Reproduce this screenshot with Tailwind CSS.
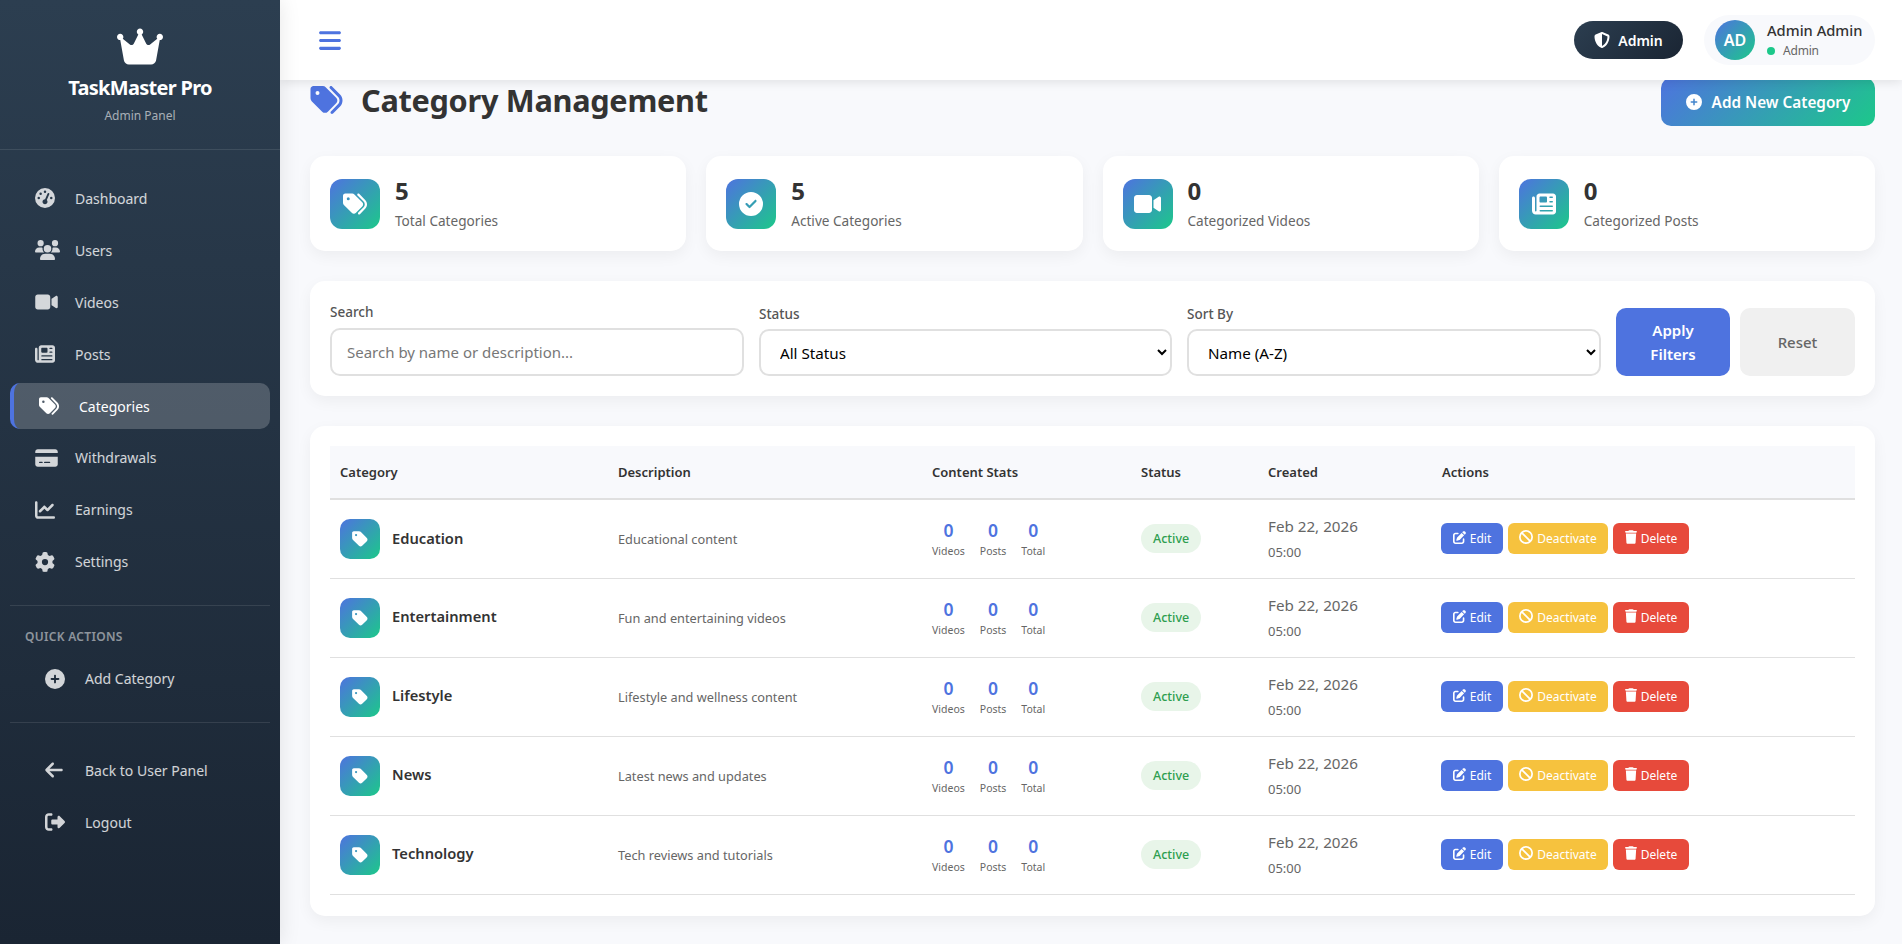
<!DOCTYPE html>
<html lang="en">
<head>
    <meta charset="UTF-8">
    <meta name="viewport" content="width=device-width, initial-scale=1.0">
    <title>Category Management - TaskMaster Pro</title>
    <script src="https://cdn.jsdelivr.net/npm/@tailwindcss/browser@4"></script>
</head>
<body class="bg-[#f8f9fc] text-[#333] font-['Noto_Sans',sans-serif] overflow-hidden">

    <!-- icon set -->
    <svg class="hidden">
        <symbol id="i-crown" viewBox="0 0 576 512"><path fill="currentColor" d="M309 106c11.4-7 19-19.7 19-34c0-22.1-17.9-40-40-40s-40 17.9-40 40c0 14.4 7.6 27 19 34L209.7 220.6c-9.1 18.2-32.7 23.4-48.6 10.7L72 160c5-6.7 8-15 8-24c0-22.1-17.9-40-40-40S0 113.9 0 136s17.9 40 40 40c.2 0 .5 0 .7 0L86.4 427.4c5.5 30.4 32 52.6 63 52.6H426.6c30.9 0 57.4-22.1 63-52.6L535.3 176c.2 0 .5 0 .7 0c22.1 0 40-17.9 40-40s-17.9-40-40-40s-40 17.9-40 40c0 9 3 17.3 8 24l-89.1 71.3c-15.9 12.7-39.5 7.5-48.6-10.7L309 106z"/></symbol>
        <symbol id="i-gauge" viewBox="0 0 512 512"><path fill="currentColor" d="M0 256a256 256 0 1 1 512 0A256 256 0 1 1 0 256zM288 96a32 32 0 1 0 -64 0 32 32 0 1 0 64 0zM256 416c35.3 0 64-28.7 64-64c0-17.4-6.9-33.1-18.1-44.6L366 161.7c5.3-12.1-.2-26.3-12.3-31.6s-26.3 .2-31.6 12.3L257.9 288c-.6 0-1.3 0-1.9 0c-35.3 0-64 28.7-64 64s28.7 64 64 64zM176 144a32 32 0 1 0 -64 0 32 32 0 1 0 64 0zM96 288a32 32 0 1 0 0-64 32 32 0 1 0 0 64zm352-32a32 32 0 1 0 -64 0 32 32 0 1 0 64 0z"/></symbol>
        <symbol id="i-users" viewBox="0 0 640 512"><path fill="currentColor" d="M144 0a80 80 0 1 1 0 160A80 80 0 1 1 144 0zM512 0a80 80 0 1 1 0 160A80 80 0 1 1 512 0zM0 298.7C0 239.8 47.8 192 106.7 192h42.7c15.9 0 31 3.5 44.6 9.7c-1.3 7.2-1.9 14.7-1.9 22.3c0 38.2 16.8 72.5 43.3 96c-.2 0-.4 0-.7 0H21.3C9.6 320 0 310.4 0 298.7zM405.3 320c-.2 0-.4 0-.7 0c26.6-23.5 43.3-57.8 43.3-96c0-7.6-.7-15-1.9-22.3c13.6-6.3 28.7-9.7 44.6-9.7h42.7C592.2 192 640 239.8 640 298.7c0 11.8-9.6 21.3-21.3 21.3H405.3zM224 224a96 96 0 1 1 192 0 96 96 0 1 1 -192 0zM128 485.3C128 411.7 187.7 352 261.3 352H378.7C452.3 352 512 411.7 512 485.3c0 14.7-11.9 26.7-26.7 26.7H154.7c-14.7 0-26.7-11.9-26.7-26.7z"/></symbol>
        <symbol id="i-video" viewBox="0 0 576 512"><path fill="currentColor" d="M0 128C0 92.7 28.7 64 64 64H320c35.3 0 64 28.7 64 64V384c0 35.3-28.7 64-64 64H64c-35.3 0-64-28.7-64-64V128zM559.1 99.8c10.4 5.6 16.9 16.4 16.9 28.2V384c0 11.8-6.5 22.6-16.9 28.2s-23 5-32.9-1.6l-96-64L416 337.1V320 192 174.9l14.2-9.5 96-64c9.8-6.5 22.4-7.2 32.9-1.6z"/></symbol>
        <symbol id="i-news" viewBox="0 0 512 512"><path fill="currentColor" d="M96 96c0-35.3 28.7-64 64-64H448c35.3 0 64 28.7 64 64V416c0 35.3-28.7 64-64 64H80c-44.2 0-80-35.8-80-80V128c0-17.7 14.3-32 32-32s32 14.3 32 32V400c0 8.8 7.2 16 16 16s16-7.2 16-16V96zm64 24v80c0 13.3 10.7 24 24 24H296c13.3 0 24-10.7 24-24V120c0-13.3-10.7-24-24-24H184c-13.3 0-24 10.7-24 24zm208-8c0 8.8 7.2 16 16 16h48c8.8 0 16-7.2 16-16s-7.2-16-16-16H384c-8.8 0-16 7.2-16 16zm0 96c0 8.8 7.2 16 16 16h48c8.8 0 16-7.2 16-16s-7.2-16-16-16H384c-8.8 0-16 7.2-16 16zM160 304c0 8.8 7.2 16 16 16H432c8.8 0 16-7.2 16-16s-7.2-16-16-16H176c-8.8 0-16 7.2-16 16zm0 96c0 8.8 7.2 16 16 16H432c8.8 0 16-7.2 16-16s-7.2-16-16-16H176c-8.8 0-16 7.2-16 16z"/></symbol>
        <symbol id="i-tags" viewBox="0 0 512 512"><path fill="currentColor" d="M345 39.1L472.8 168.4c52.4 53 52.4 138.2 0 191.2L360.8 472.9c-9.3 9.4-24.5 9.5-33.9 .2s-9.5-24.5-.2-33.9L438.6 325.9c33.9-34.3 33.9-89.4 0-123.7L310.9 72.9c-9.3-9.4-9.2-24.6 .2-33.9s24.6-9.2 33.9 .2zM0 229.5V80C0 53.5 21.5 32 48 32H197.5c17 0 33.3 6.7 45.3 18.7l168 168c25 25 25 65.5 0 90.5L277.3 442.7c-25 25-65.5 25-90.5 0l-168-168C6.7 262.7 0 246.5 0 229.5zM144 144a32 32 0 1 0 -64 0 32 32 0 1 0 64 0z"/></symbol>
        <symbol id="i-tag" viewBox="0 0 448 512"><path fill="currentColor" d="M0 80V229.5c0 17 6.7 33.3 18.7 45.3l176 176c25 25 65.5 25 90.5 0L418.7 317.3c25-25 25-65.5 0-90.5l-176-176c-12-12-28.3-18.7-45.3-18.7H48C21.5 32 0 53.5 0 80zm112 32a32 32 0 1 1 0 64 32 32 0 1 1 0-64z"/></symbol>
        <symbol id="i-card" viewBox="0 0 576 512"><path fill="currentColor" d="M64 32C28.7 32 0 60.7 0 96v32H576V96c0-35.3-28.7-64-64-64H64zM576 224H0V416c0 35.3 28.7 64 64 64H512c35.3 0 64-28.7 64-64V224zM112 352h64c8.8 0 16 7.2 16 16s-7.2 16-16 16H112c-8.8 0-16-7.2-16-16s7.2-16 16-16zm112 16c0-8.8 7.2-16 16-16H368c8.8 0 16 7.2 16 16s-7.2 16-16 16H240c-8.8 0-16-7.2-16-16z"/></symbol>
        <symbol id="i-chart" viewBox="0 0 512 512"><path fill="currentColor" d="M64 64c0-17.7-14.3-32-32-32S0 46.3 0 64V400c0 44.2 35.8 80 80 80H480c17.7 0 32-14.3 32-32s-14.3-32-32-32H80c-8.8 0-16-7.2-16-16V64zm406.6 86.6c12.5-12.5 12.5-32.8 0-45.3s-32.8-12.5-45.3 0L320 210.7l-57.4-57.4c-12.5-12.5-32.8-12.5-45.3 0l-112 112c-12.5 12.5-12.5 32.8 0 45.3s32.8 12.5 45.3 0L240 221.3l57.4 57.4c12.5 12.5 32.8 12.5 45.3 0l128-128z"/></symbol>
        <symbol id="i-gear" viewBox="0 0 512 512"><path fill="currentColor" d="M495.9 166.6c3.2 8.7 .5 18.4-6.4 24.6l-43.3 39.4c1.1 8.3 1.7 16.8 1.7 25.4s-.6 17.1-1.7 25.4l43.3 39.4c6.9 6.2 9.6 15.9 6.4 24.6c-4.4 11.9-9.7 23.3-15.8 34.3l-4.7 8.1c-6.6 11-14 21.4-22.1 31.2c-5.9 7.2-15.7 9.6-24.5 6.8l-55.7-17.7c-13.4 10.3-28.2 18.9-44 25.4l-12.5 57.1c-2 9.1-9 16.3-18.2 17.8c-13.8 2.3-28 3.5-42.5 3.5s-28.7-1.2-42.5-3.5c-9.2-1.5-16.2-8.7-18.2-17.8l-12.5-57.1c-15.8-6.5-30.6-15.1-44-25.4L83.1 425.9c-8.8 2.8-18.6 .3-24.5-6.8c-8.1-9.8-15.5-20.2-22.1-31.2l-4.7-8.1c-6.1-11-11.4-22.4-15.8-34.3c-3.2-8.7-.5-18.4 6.4-24.6l43.3-39.4C64.6 273.1 64 264.6 64 256s.6-17.1 1.7-25.4L22.4 191.2c-6.9-6.2-9.6-15.9-6.4-24.6c4.4-11.9 9.7-23.3 15.8-34.3l4.7-8.1c6.6-11 14-21.4 22.1-31.2c5.9-7.2 15.7-9.6 24.5-6.8l55.7 17.7c13.4-10.3 28.2-18.9 44-25.4l12.5-57.1c2-9.1 9-16.3 18.2-17.8C227.3 1.2 241.5 0 256 0s28.7 1.2 42.5 3.5c9.2 1.5 16.2 8.7 18.2 17.8l12.5 57.1c15.8 6.5 30.6 15.1 44 25.4l55.7-17.7c8.8-2.8 18.6-.3 24.5 6.8c8.1 9.8 15.5 20.2 22.1 31.2l4.7 8.1c6.1 11 11.4 22.4 15.8 34.3zM256 336a80 80 0 1 0 0-160 80 80 0 1 0 0 160z"/></symbol>
        <symbol id="i-plus" viewBox="0 0 512 512"><path fill="currentColor" d="M256 512A256 256 0 1 0 256 0a256 256 0 1 0 0 512zM232 344V280H168c-13.3 0-24-10.7-24-24s10.7-24 24-24h64V168c0-13.3 10.7-24 24-24s24 10.7 24 24v64h64c13.3 0 24 10.7 24 24s-10.7 24-24 24H280v64c0 13.3-10.7 24-24 24s-24-10.7-24-24z"/></symbol>
        <symbol id="i-back" viewBox="0 0 448 512"><path fill="currentColor" d="M9.4 233.4c-12.5 12.5-12.5 32.8 0 45.3l160 160c12.5 12.5 32.8 12.5 45.3 0s12.5-32.8 0-45.3L109.2 288 416 288c17.7 0 32-14.3 32-32s-14.3-32-32-32l-306.7 0L214.6 118.6c12.5-12.5 12.5-32.8 0-45.3s-32.8-12.5-45.3 0l-160 160z"/></symbol>
        <symbol id="i-logout" viewBox="0 0 512 512"><path fill="currentColor" d="M377.9 105.9L500.7 228.7c7.2 7.2 11.3 17.1 11.3 27.3s-4.1 20.1-11.3 27.3L377.9 406.1c-6.4 6.4-15 9.9-24 9.9c-18.7 0-33.9-15.2-33.9-33.9l0-62.1-128 0c-17.7 0-32-14.3-32-32l0-64c0-17.7 14.3-32 32-32l128 0 0-62.1c0-18.7 15.2-33.9 33.9-33.9c9 0 17.6 3.6 24 9.9zM160 96L96 96c-17.7 0-32 14.3-32 32l0 256c0 17.7 14.3 32 32 32l64 0c17.7 0 32 14.3 32 32s-14.3 32-32 32l-64 0c-53 0-96-43-96-96L0 128C0 75 43 32 96 32l64 0c17.7 0 32 14.3 32 32s-14.3 32-32 32z"/></symbol>
        <symbol id="i-bars" viewBox="0 0 448 512"><path fill="currentColor" d="M0 96C0 78.3 14.3 64 32 64H416c17.7 0 32 14.3 32 32s-14.3 32-32 32H32C14.3 128 0 113.7 0 96zM0 256c0-17.7 14.3-32 32-32H416c17.7 0 32 14.3 32 32s-14.3 32-32 32H32c-17.7 0-32-14.3-32-32zM448 416c0 17.7-14.3 32-32 32H32c-17.7 0-32-14.3-32-32s14.3-32 32-32H416c17.7 0 32 14.3 32 32z"/></symbol>
        <symbol id="i-shield" viewBox="0 0 512 512"><path fill="currentColor" d="M256 0c4.6 0 9.2 1 13.4 2.9L457.7 82.8c22 9.3 38.4 31 38.3 57.2c-.5 99.2-41.3 280.7-213.6 363.2c-16.7 8-36.1 8-52.8 0C57.3 420.7 16.5 239.2 16 140c-.1-26.2 16.3-47.9 38.3-57.2L242.7 2.9C246.8 1 251.4 0 256 0zm0 66.8V444.8C394 378 431.1 230.1 432 141.4L256 66.8l0 0z"/></symbol>
        <symbol id="i-check" viewBox="0 0 512 512"><path fill="currentColor" d="M256 512A256 256 0 1 0 256 0a256 256 0 1 0 0 512zM369 209L241 337c-9.4 9.4-24.6 9.4-33.9 0l-64-64c-9.4-9.4-9.4-24.6 0-33.9s24.6-9.4 33.9 0l47 47L335 175c9.4-9.4 24.6-9.4 33.9 0s9.4 24.6 0 33.9z"/></symbol>
        <symbol id="i-edit" viewBox="0 0 512 512"><path fill="currentColor" d="M471.6 21.7c-21.9-21.9-57.3-21.9-79.2 0L362.3 51.7l97.9 97.9 30.1-30.1c21.9-21.9 21.9-57.3 0-79.2L471.6 21.7zm-299.2 220c-6.1 6.1-10.8 13.6-13.5 21.9l-29.6 88.8c-2.9 8.6-.6 18.1 5.8 24.6s15.9 8.7 24.6 5.8l88.8-29.6c8.2-2.7 15.7-7.4 21.9-13.5L437.7 172.3 339.7 74.3 172.4 241.7zM96 64C43 64 0 107 0 160V416c0 53 43 96 96 96H352c53 0 96-43 96-96V320c0-17.7-14.3-32-32-32s-32 14.3-32 32v96c0 17.7-14.3 32-32 32H96c-17.7 0-32-14.3-32-32V160c0-17.7 14.3-32 32-32h96c17.7 0 32-14.3 32-32s-14.3-32-32-32H96z"/></symbol>
        <symbol id="i-ban" viewBox="0 0 512 512"><path fill="currentColor" d="M367.2 412.5L99.5 144.8C77.1 176.1 64 214.5 64 256c0 106 86 192 192 192c41.5 0 79.9-13.1 111.2-35.5zm45.3-45.3C434.9 335.9 448 297.5 448 256c0-106-86-192-192-192c-41.5 0-79.9 13.1-111.2 35.5L412.5 367.2zM0 256a256 256 0 1 1 512 0A256 256 0 1 1 0 256z"/></symbol>
        <symbol id="i-trash" viewBox="0 0 448 512"><path fill="currentColor" d="M135.2 17.7L128 32H32C14.3 32 0 46.3 0 64S14.3 96 32 96H416c17.7 0 32-14.3 32-32s-14.3-32-32-32H320l-7.2-14.3C307.4 6.8 296.3 0 284.2 0H163.8c-12.1 0-23.2 6.8-28.6 17.7zM416 128H32L53.2 467c1.6 25.3 22.6 45 47.9 45H346.9c25.3 0 46.3-19.7 47.9-45L416 128z"/></symbol>
    </svg>

    <div class="flex h-screen">

        <!-- sidebar -->
        <aside class="w-[280px] shrink-0 relative z-20 flex flex-col text-white bg-[linear-gradient(180deg,#2c3e50,#1a2533)] shadow-[0_0_20px_rgba(0,0,0,0.1)]">
            <div class="h-[150px] pt-[26px] flex flex-col items-center border-b border-white/10">
                <svg class="w-[46px] h-[41px]"><use href="#i-crown"/></svg>
                <h1 class="mt-[7px] text-[20px] leading-[28px] font-bold tracking-[-0.7px]">TaskMaster Pro</h1>
                <p class="mt-[6px] text-[12px] leading-[16px] text-white/60">Admin Panel</p>
            </div>

            <nav class="px-[10px] pt-[20px] text-[14px] text-white/80">
                <a href="#" class="h-[46.9px] mt-[5px] pl-[25px] flex items-center">
                    <span class="w-[40px]"><svg class="w-[20px] h-[20px]"><use href="#i-gauge"/></svg></span>Dashboard
                </a>
                <a href="#" class="h-[46.9px] mt-[5px] pl-[25px] flex items-center">
                    <span class="w-[40px]"><svg class="w-[25px] h-[20px]"><use href="#i-users"/></svg></span>Users
                </a>
                <a href="#" class="h-[46.9px] mt-[5px] pl-[25px] flex items-center">
                    <span class="w-[40px]"><svg class="w-[23px] h-[20px]"><use href="#i-video"/></svg></span>Videos
                </a>
                <a href="#" class="h-[46.9px] mt-[5px] pl-[25px] flex items-center">
                    <span class="w-[40px]"><svg class="w-[20px] h-[20px]"><use href="#i-news"/></svg></span>Posts
                </a>
                <a href="#" class="h-[46.9px] mt-[5px] pl-[25px] flex items-center rounded-[10px] border-l-4 border-[#4e73df] bg-white/20 text-white">
                    <span class="w-[40px]"><svg class="w-[20px] h-[20px]"><use href="#i-tags"/></svg></span>Categories
                </a>
                <a href="#" class="h-[46.9px] mt-[5px] pl-[25px] flex items-center">
                    <span class="w-[40px]"><svg class="w-[23px] h-[20px]"><use href="#i-card"/></svg></span>Withdrawals
                </a>
                <a href="#" class="h-[46.9px] mt-[5px] pl-[25px] flex items-center">
                    <span class="w-[40px]"><svg class="w-[20px] h-[20px]"><use href="#i-chart"/></svg></span>Earnings
                </a>
                <a href="#" class="h-[46.9px] mt-[5px] pl-[25px] flex items-center">
                    <span class="w-[40px]"><svg class="w-[20px] h-[20px]"><use href="#i-gear"/></svg></span>Settings
                </a>

                <div class="mt-[20px] border-t border-white/10 pt-[23px]">
                    <p class="pl-[15px] text-[12px] leading-[16px] font-semibold tracking-[0.3px] text-white/50">QUICK ACTIONS</p>
                    <a href="#" class="h-[46.9px] mt-[10px] pl-[35px] flex items-center">
                        <span class="w-[40px]"><svg class="w-[20px] h-[20px]"><use href="#i-plus"/></svg></span>Add Category
                    </a>
                </div>

                <div class="mt-[20px] border-t border-white/10 pt-[24px]">
                    <a href="#" class="h-[46.9px] pl-[35px] flex items-center">
                        <span class="w-[40px]"><svg class="w-[18px] h-[20px]"><use href="#i-back"/></svg></span>Back to User Panel
                    </a>
                    <a href="#" class="h-[46.9px] mt-[5px] pl-[35px] flex items-center">
                        <span class="w-[40px]"><svg class="w-[20px] h-[20px]"><use href="#i-logout"/></svg></span>Logout
                    </a>
                </div>
            </nav>
        </aside>

        <div class="flex-1 min-w-0 flex flex-col">

            <!-- top bar -->
            <header class="h-[80px] shrink-0 relative z-10 bg-white pl-[39px] pr-[27px] flex items-center justify-between shadow-[0_2px_10px_rgba(0,0,0,0.1)]">
                <svg class="w-[22px] h-[25px] text-[#4e73df]"><use href="#i-bars"/></svg>
                <div class="flex items-center gap-[21px]">
                    <div class="h-[38px] w-[109px] rounded-[20px] flex items-center justify-center gap-[8px] text-white text-[14px] font-semibold bg-[linear-gradient(135deg,#2c3e50,#1a2533)]">
                        <svg class="w-[16px] h-[16px]"><use href="#i-shield"/></svg>Admin
                    </div>
                    <div class="h-[50px] w-[171px] rounded-[25px] bg-[#f8f9fc] pl-[11px] flex items-center gap-[12px]">
                        <div class="w-[40px] h-[40px] rounded-full flex items-center justify-center text-white text-[16px] font-semibold bg-[linear-gradient(135deg,#4e73df,#1cc88a)]">AD</div>
                        <div>
                            <p class="text-[14.7px] leading-[20px] font-medium">Admin Admin</p>
                            <p class="mt-[1px] text-[12px] leading-[20px] tracking-[-0.2px] text-[#666] flex items-center gap-[8px]"><span class="w-[8px] h-[8px] rounded-full bg-[#1cc88a]"></span>Admin</p>
                        </div>
                    </div>
                </div>
            </header>

            <main class="flex-1 overflow-hidden pl-[30px] pr-[27px]">
                <div class="-mt-[2px] h-[48px] flex items-center justify-between">
                    <div class="flex items-center gap-[18px]">
                        <svg class="w-[33px] h-[32px] text-[#4e73df] -mt-[4px]"><use href="#i-tags"/></svg>
                        <h2 class="-mt-[3px] text-[30.7px] font-bold tracking-[-0.3px]">Category Management</h2>
                    </div>
                    <button class="w-[214px] h-[48px] rounded-[10px] flex items-center justify-center gap-[10px] text-white text-[15.3px] font-semibold bg-[linear-gradient(135deg,#4e73df,#1cc88a)]">
                        <svg class="w-[16px] h-[16px]"><use href="#i-plus"/></svg>Add New Category
                    </button>
                </div>

                <!-- stat cards -->
                <section class="mt-[30px] grid grid-cols-4 gap-[20px]">
                    <div class="h-[95px] bg-white rounded-[15px] px-[20px] flex items-center gap-[15px] shadow-[0_5px_15px_rgba(0,0,0,0.05)]">
                        <div class="w-[50px] h-[50px] rounded-[12px] flex items-center justify-center text-white bg-[linear-gradient(135deg,#4e73df,#1cc88a)]"><svg class="w-[24px] h-[24px]"><use href="#i-tags"/></svg></div>
                        <div>
                            <p class="text-[24px] leading-[28px] font-bold">5</p>
                            <p class="mt-[7px] text-[13.6px] leading-[18px] text-[#666]">Total Categories</p>
                        </div>
                    </div>
                    <div class="h-[95px] bg-white rounded-[15px] px-[20px] flex items-center gap-[15px] shadow-[0_5px_15px_rgba(0,0,0,0.05)]">
                        <div class="w-[50px] h-[50px] rounded-[12px] flex items-center justify-center text-white bg-[linear-gradient(135deg,#4e73df,#1cc88a)]"><svg class="w-[24px] h-[24px]"><use href="#i-check"/></svg></div>
                        <div>
                            <p class="text-[24px] leading-[28px] font-bold">5</p>
                            <p class="mt-[7px] text-[13.6px] leading-[18px] text-[#666]">Active Categories</p>
                        </div>
                    </div>
                    <div class="h-[95px] bg-white rounded-[15px] px-[20px] flex items-center gap-[15px] shadow-[0_5px_15px_rgba(0,0,0,0.05)]">
                        <div class="w-[50px] h-[50px] rounded-[12px] flex items-center justify-center text-white bg-[linear-gradient(135deg,#4e73df,#1cc88a)]"><svg class="w-[27px] h-[24px]"><use href="#i-video"/></svg></div>
                        <div>
                            <p class="text-[24px] leading-[28px] font-bold">0</p>
                            <p class="mt-[7px] text-[13.6px] leading-[18px] text-[#666]">Categorized Videos</p>
                        </div>
                    </div>
                    <div class="h-[95px] bg-white rounded-[15px] px-[20px] flex items-center gap-[15px] shadow-[0_5px_15px_rgba(0,0,0,0.05)]">
                        <div class="w-[50px] h-[50px] rounded-[12px] flex items-center justify-center text-white bg-[linear-gradient(135deg,#4e73df,#1cc88a)]"><svg class="w-[24px] h-[24px]"><use href="#i-news"/></svg></div>
                        <div>
                            <p class="text-[24px] leading-[28px] font-bold">0</p>
                            <p class="mt-[7px] text-[13.6px] leading-[18px] text-[#666]">Categorized Posts</p>
                        </div>
                    </div>
                </section>

                <!-- filters -->
                <section class="mt-[30px] h-[115px] bg-white rounded-[15px] px-[20px] pb-[20px] flex items-end shadow-[0_5px_15px_rgba(0,0,0,0.05)]">
                    <div class="w-[414px]">
                        <label class="block mb-[7px] text-[13.5px] leading-[18px] font-medium text-[#555]">Search</label>
                        <input type="text" placeholder="Search by name or description..." class="w-full h-[48px] px-[15px] rounded-[10px] border-2 border-[#e0e0e0] text-[15px] placeholder:text-[#777]">
                    </div>
                    <div class="w-[413px] ml-[15px]">
                        <label class="block mb-[6px] text-[13.5px] leading-[18px] font-medium text-[#555]">Status</label>
                        <select class="w-full h-[47px] px-[15px] rounded-[10px] border-2 border-[#e0e0e0] bg-white text-[15.2px] text-black">
                            <option>All Status</option>
                        </select>
                    </div>
                    <div class="w-[414px] ml-[15px]">
                        <label class="block mb-[6px] text-[13.5px] leading-[18px] font-medium text-[#555]">Sort By</label>
                        <select class="w-full h-[47px] px-[15px] rounded-[10px] border-2 border-[#e0e0e0] bg-white text-[15.2px] text-black">
                            <option>Name (A-Z)</option>
                        </select>
                    </div>
                    <button class="w-[114px] h-[68px] ml-[15px] rounded-[10px] bg-[#4e73df] text-white text-[15px] leading-[24px] font-semibold px-[25px]">Apply Filters</button>
                    <button class="w-[115px] h-[68px] ml-[10px] rounded-[10px] bg-[#f0f0f0] text-[#666] text-[15px] font-medium">Reset</button>
                </section>

                <!-- category table -->
                <section class="mt-[30px] bg-white rounded-[15px] px-[20px] pt-[20px] pb-[21px] shadow-[0_5px_15px_rgba(0,0,0,0.05)]">
                    <table class="w-full table-fixed border-collapse text-left">
                        <colgroup>
                            <col class="w-[278px]"><col class="w-[314px]"><col class="w-[209px]"><col class="w-[127px]"><col class="w-[174px]"><col>
                        </colgroup>
                        <thead class="bg-[#f8f9fc]">
                            <tr class="h-[53px] border-b-2 border-[#e0e0e0] text-[13px] font-semibold">
                                <th class="px-[10px] pt-[1px] font-semibold">Category</th>
                                <th class="px-[10px] pt-[1px] font-semibold">Description</th>
                                <th class="px-[10px] pt-[1px] font-semibold">Content Stats</th>
                                <th class="px-[10px] pt-[1px] font-semibold">Status</th>
                                <th class="px-[10px] pt-[1px] font-semibold">Created</th>
                                <th class="px-[10px] pt-[1px] font-semibold">Actions</th>
                            </tr>
                        </thead>
                        <tbody>
                            <tr class="h-[79px] border-b border-[#e0e0e0]">
                                <td class="px-[10px]"><div class="flex items-center gap-[12px]"><div class="w-[40px] h-[40px] rounded-[10px] flex items-center justify-center text-white bg-[linear-gradient(135deg,#4e73df,#1cc88a)]"><svg class="w-[16px] h-[18px]"><use href="#i-tag"/></svg></div><span class="-mt-[2px] text-[14.7px] font-semibold">Education</span></div></td>
                                <td class="px-[10px] pt-[2px] text-[12.75px] text-[#666]">Educational content</td>
                                <td class="px-[10px] pt-[1px]"><div class="flex gap-[15px]">
                                    <div class="flex flex-col items-center"><span class="text-[17.5px] leading-[22px] font-semibold text-[#4e73df]">0</span><span class="mt-[1px] text-[10.5px] leading-[18px] text-[#666]">Videos</span></div>
                                    <div class="flex flex-col items-center"><span class="text-[17.5px] leading-[22px] font-semibold text-[#4e73df]">0</span><span class="mt-[1px] text-[10.5px] leading-[18px] text-[#666]">Posts</span></div>
                                    <div class="flex flex-col items-center"><span class="text-[17.5px] leading-[22px] font-semibold text-[#4e73df]">0</span><span class="mt-[1px] text-[10.5px] leading-[18px] text-[#666]">Total</span></div>
                                </div></td>
                                <td class="px-[10px]"><span class="inline-block h-[29px] px-[12px] rounded-[20px] bg-[#e8f5e9] text-[12.5px] leading-[29px] font-medium text-[#2e9e4f]">Active</span></td>
                                <td class="px-[10px] pt-[2px] text-[15.2px] leading-[25px] text-[#666]">Feb 22, 2026<br><span class="text-[13px]">05:00</span></td>
                                <td class="pl-[9px]"><div class="flex gap-[5px] text-[12px] text-white">
                                    <button class="h-[31px] w-[62px] rounded-[6px] bg-[#4e73df] flex items-center justify-center gap-[4px]"><svg class="w-[13px] h-[13px] -mt-[3px]"><use href="#i-edit"/></svg>Edit</button>
                                    <button class="h-[31px] w-[100px] rounded-[6px] bg-[#f6c23e] flex items-center justify-center gap-[4px]"><svg class="w-[14px] h-[14px] -mt-[3px]"><use href="#i-ban"/></svg>Deactivate</button>
                                    <button class="h-[31px] w-[76px] rounded-[6px] bg-[#e74a3b] flex items-center justify-center gap-[4px]"><svg class="w-[12px] h-[14px] -mt-[3px]"><use href="#i-trash"/></svg>Delete</button>
                                </div></td>
                            </tr>
                            <tr class="h-[79px] border-b border-[#e0e0e0]">
                                <td class="px-[10px]"><div class="flex items-center gap-[12px]"><div class="w-[40px] h-[40px] rounded-[10px] flex items-center justify-center text-white bg-[linear-gradient(135deg,#4e73df,#1cc88a)]"><svg class="w-[16px] h-[18px]"><use href="#i-tag"/></svg></div><span class="-mt-[2px] text-[14.7px] font-semibold">Entertainment</span></div></td>
                                <td class="px-[10px] pt-[2px] text-[12.75px] text-[#666]">Fun and entertaining videos</td>
                                <td class="px-[10px] pt-[1px]"><div class="flex gap-[15px]">
                                    <div class="flex flex-col items-center"><span class="text-[17.5px] leading-[22px] font-semibold text-[#4e73df]">0</span><span class="mt-[1px] text-[10.5px] leading-[18px] text-[#666]">Videos</span></div>
                                    <div class="flex flex-col items-center"><span class="text-[17.5px] leading-[22px] font-semibold text-[#4e73df]">0</span><span class="mt-[1px] text-[10.5px] leading-[18px] text-[#666]">Posts</span></div>
                                    <div class="flex flex-col items-center"><span class="text-[17.5px] leading-[22px] font-semibold text-[#4e73df]">0</span><span class="mt-[1px] text-[10.5px] leading-[18px] text-[#666]">Total</span></div>
                                </div></td>
                                <td class="px-[10px]"><span class="inline-block h-[29px] px-[12px] rounded-[20px] bg-[#e8f5e9] text-[12.5px] leading-[29px] font-medium text-[#2e9e4f]">Active</span></td>
                                <td class="px-[10px] pt-[2px] text-[15.2px] leading-[25px] text-[#666]">Feb 22, 2026<br><span class="text-[13px]">05:00</span></td>
                                <td class="pl-[9px]"><div class="flex gap-[5px] text-[12px] text-white">
                                    <button class="h-[31px] w-[62px] rounded-[6px] bg-[#4e73df] flex items-center justify-center gap-[4px]"><svg class="w-[13px] h-[13px] -mt-[3px]"><use href="#i-edit"/></svg>Edit</button>
                                    <button class="h-[31px] w-[100px] rounded-[6px] bg-[#f6c23e] flex items-center justify-center gap-[4px]"><svg class="w-[14px] h-[14px] -mt-[3px]"><use href="#i-ban"/></svg>Deactivate</button>
                                    <button class="h-[31px] w-[76px] rounded-[6px] bg-[#e74a3b] flex items-center justify-center gap-[4px]"><svg class="w-[12px] h-[14px] -mt-[3px]"><use href="#i-trash"/></svg>Delete</button>
                                </div></td>
                            </tr>
                            <tr class="h-[79px] border-b border-[#e0e0e0]">
                                <td class="px-[10px]"><div class="flex items-center gap-[12px]"><div class="w-[40px] h-[40px] rounded-[10px] flex items-center justify-center text-white bg-[linear-gradient(135deg,#4e73df,#1cc88a)]"><svg class="w-[16px] h-[18px]"><use href="#i-tag"/></svg></div><span class="-mt-[2px] text-[14.7px] font-semibold">Lifestyle</span></div></td>
                                <td class="px-[10px] pt-[2px] text-[12.75px] text-[#666]">Lifestyle and wellness content</td>
                                <td class="px-[10px] pt-[1px]"><div class="flex gap-[15px]">
                                    <div class="flex flex-col items-center"><span class="text-[17.5px] leading-[22px] font-semibold text-[#4e73df]">0</span><span class="mt-[1px] text-[10.5px] leading-[18px] text-[#666]">Videos</span></div>
                                    <div class="flex flex-col items-center"><span class="text-[17.5px] leading-[22px] font-semibold text-[#4e73df]">0</span><span class="mt-[1px] text-[10.5px] leading-[18px] text-[#666]">Posts</span></div>
                                    <div class="flex flex-col items-center"><span class="text-[17.5px] leading-[22px] font-semibold text-[#4e73df]">0</span><span class="mt-[1px] text-[10.5px] leading-[18px] text-[#666]">Total</span></div>
                                </div></td>
                                <td class="px-[10px]"><span class="inline-block h-[29px] px-[12px] rounded-[20px] bg-[#e8f5e9] text-[12.5px] leading-[29px] font-medium text-[#2e9e4f]">Active</span></td>
                                <td class="px-[10px] pt-[2px] text-[15.2px] leading-[25px] text-[#666]">Feb 22, 2026<br><span class="text-[13px]">05:00</span></td>
                                <td class="pl-[9px]"><div class="flex gap-[5px] text-[12px] text-white">
                                    <button class="h-[31px] w-[62px] rounded-[6px] bg-[#4e73df] flex items-center justify-center gap-[4px]"><svg class="w-[13px] h-[13px] -mt-[3px]"><use href="#i-edit"/></svg>Edit</button>
                                    <button class="h-[31px] w-[100px] rounded-[6px] bg-[#f6c23e] flex items-center justify-center gap-[4px]"><svg class="w-[14px] h-[14px] -mt-[3px]"><use href="#i-ban"/></svg>Deactivate</button>
                                    <button class="h-[31px] w-[76px] rounded-[6px] bg-[#e74a3b] flex items-center justify-center gap-[4px]"><svg class="w-[12px] h-[14px] -mt-[3px]"><use href="#i-trash"/></svg>Delete</button>
                                </div></td>
                            </tr>
                            <tr class="h-[79px] border-b border-[#e0e0e0]">
                                <td class="px-[10px]"><div class="flex items-center gap-[12px]"><div class="w-[40px] h-[40px] rounded-[10px] flex items-center justify-center text-white bg-[linear-gradient(135deg,#4e73df,#1cc88a)]"><svg class="w-[16px] h-[18px]"><use href="#i-tag"/></svg></div><span class="-mt-[2px] text-[14.7px] font-semibold">News</span></div></td>
                                <td class="px-[10px] pt-[2px] text-[12.75px] text-[#666]">Latest news and updates</td>
                                <td class="px-[10px] pt-[1px]"><div class="flex gap-[15px]">
                                    <div class="flex flex-col items-center"><span class="text-[17.5px] leading-[22px] font-semibold text-[#4e73df]">0</span><span class="mt-[1px] text-[10.5px] leading-[18px] text-[#666]">Videos</span></div>
                                    <div class="flex flex-col items-center"><span class="text-[17.5px] leading-[22px] font-semibold text-[#4e73df]">0</span><span class="mt-[1px] text-[10.5px] leading-[18px] text-[#666]">Posts</span></div>
                                    <div class="flex flex-col items-center"><span class="text-[17.5px] leading-[22px] font-semibold text-[#4e73df]">0</span><span class="mt-[1px] text-[10.5px] leading-[18px] text-[#666]">Total</span></div>
                                </div></td>
                                <td class="px-[10px]"><span class="inline-block h-[29px] px-[12px] rounded-[20px] bg-[#e8f5e9] text-[12.5px] leading-[29px] font-medium text-[#2e9e4f]">Active</span></td>
                                <td class="px-[10px] pt-[2px] text-[15.2px] leading-[25px] text-[#666]">Feb 22, 2026<br><span class="text-[13px]">05:00</span></td>
                                <td class="pl-[9px]"><div class="flex gap-[5px] text-[12px] text-white">
                                    <button class="h-[31px] w-[62px] rounded-[6px] bg-[#4e73df] flex items-center justify-center gap-[4px]"><svg class="w-[13px] h-[13px] -mt-[3px]"><use href="#i-edit"/></svg>Edit</button>
                                    <button class="h-[31px] w-[100px] rounded-[6px] bg-[#f6c23e] flex items-center justify-center gap-[4px]"><svg class="w-[14px] h-[14px] -mt-[3px]"><use href="#i-ban"/></svg>Deactivate</button>
                                    <button class="h-[31px] w-[76px] rounded-[6px] bg-[#e74a3b] flex items-center justify-center gap-[4px]"><svg class="w-[12px] h-[14px] -mt-[3px]"><use href="#i-trash"/></svg>Delete</button>
                                </div></td>
                            </tr>
                            <tr class="h-[79px] border-b border-[#e0e0e0]">
                                <td class="px-[10px]"><div class="flex items-center gap-[12px]"><div class="w-[40px] h-[40px] rounded-[10px] flex items-center justify-center text-white bg-[linear-gradient(135deg,#4e73df,#1cc88a)]"><svg class="w-[16px] h-[18px]"><use href="#i-tag"/></svg></div><span class="-mt-[2px] text-[14.7px] font-semibold">Technology</span></div></td>
                                <td class="px-[10px] pt-[2px] text-[12.75px] text-[#666]">Tech reviews and tutorials</td>
                                <td class="px-[10px] pt-[1px]"><div class="flex gap-[15px]">
                                    <div class="flex flex-col items-center"><span class="text-[17.5px] leading-[22px] font-semibold text-[#4e73df]">0</span><span class="mt-[1px] text-[10.5px] leading-[18px] text-[#666]">Videos</span></div>
                                    <div class="flex flex-col items-center"><span class="text-[17.5px] leading-[22px] font-semibold text-[#4e73df]">0</span><span class="mt-[1px] text-[10.5px] leading-[18px] text-[#666]">Posts</span></div>
                                    <div class="flex flex-col items-center"><span class="text-[17.5px] leading-[22px] font-semibold text-[#4e73df]">0</span><span class="mt-[1px] text-[10.5px] leading-[18px] text-[#666]">Total</span></div>
                                </div></td>
                                <td class="px-[10px]"><span class="inline-block h-[29px] px-[12px] rounded-[20px] bg-[#e8f5e9] text-[12.5px] leading-[29px] font-medium text-[#2e9e4f]">Active</span></td>
                                <td class="px-[10px] pt-[2px] text-[15.2px] leading-[25px] text-[#666]">Feb 22, 2026<br><span class="text-[13px]">05:00</span></td>
                                <td class="pl-[9px]"><div class="flex gap-[5px] text-[12px] text-white">
                                    <button class="h-[31px] w-[62px] rounded-[6px] bg-[#4e73df] flex items-center justify-center gap-[4px]"><svg class="w-[13px] h-[13px] -mt-[3px]"><use href="#i-edit"/></svg>Edit</button>
                                    <button class="h-[31px] w-[100px] rounded-[6px] bg-[#f6c23e] flex items-center justify-center gap-[4px]"><svg class="w-[14px] h-[14px] -mt-[3px]"><use href="#i-ban"/></svg>Deactivate</button>
                                    <button class="h-[31px] w-[76px] rounded-[6px] bg-[#e74a3b] flex items-center justify-center gap-[4px]"><svg class="w-[12px] h-[14px] -mt-[3px]"><use href="#i-trash"/></svg>Delete</button>
                                </div></td>
                            </tr>
                        </tbody>
                    </table>
                </section>
            </main>
        </div>
    </div>
</body>
</html>
